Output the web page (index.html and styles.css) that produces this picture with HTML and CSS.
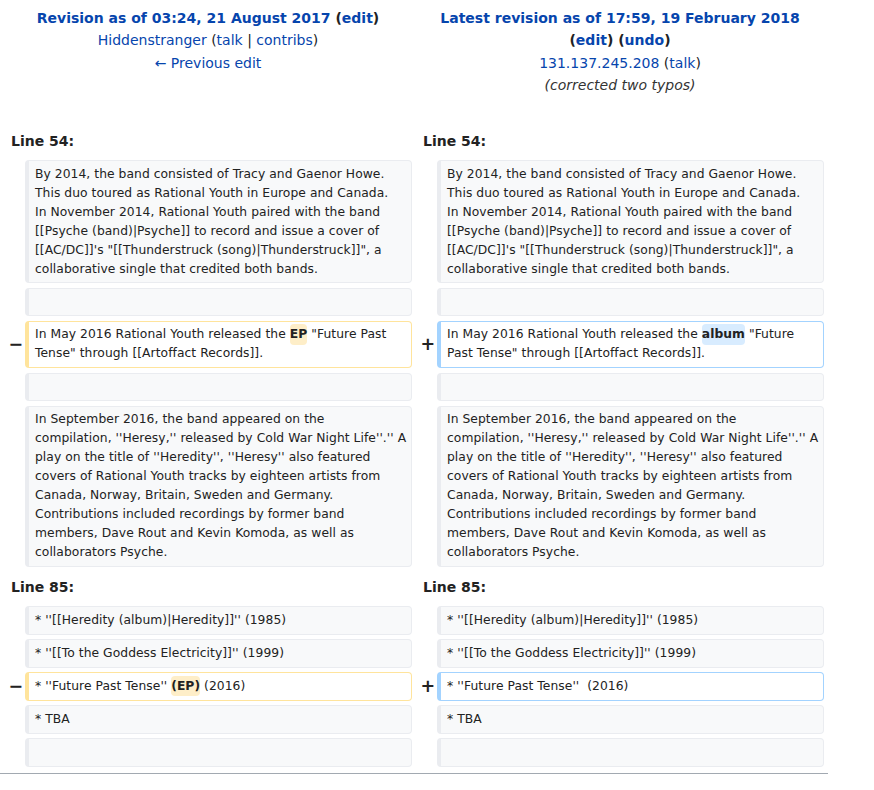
FILE: index.html
```html
<!DOCTYPE html>
<html>
<head>
<meta charset="utf-8">
<link rel="stylesheet" href="styles.css">
</head>
<body>
<div class="diff">
  <div class="title">
    <div class="t-line"><strong><a href="#">Revision as of 03:24, 21 August 2017</a> (<a href="#">edit</a>)</strong></div>
    <div class="t-line"><a href="#">Hiddenstranger</a> (<a href="#">talk</a> | <a href="#">contribs</a>)</div>
    <div class="t-line"><a href="#">← Previous edit</a></div>
  </div>
  <div class="title">
    <div class="t-line"><strong><a href="#">Latest revision as of 17:59, 19 February 2018</a> (<a href="#">edit</a>) (<a href="#">undo</a>)</strong></div>
    <div class="t-line"><a href="#">131.137.245.208</a> (<a href="#">talk</a>)</div>
    <div class="t-line comment">(corrected two typos)</div>
  </div>

  <div class="lineno first">Line 54:</div>
  <div class="lineno first">Line 54:</div>

  <div class="marker"></div>
  <div class="cell ctx pre">By 2014, the band consisted of Tracy and Gaenor Howe.<br>This duo toured as Rational Youth in Europe and Canada.<br>In November 2014, Rational Youth paired with the band<br>[[Psyche (band)|Psyche]] to record and issue a cover of<br>[[AC/DC]]'s "[[Thunderstruck (song)|Thunderstruck]]", a<br>collaborative single that credited both bands.</div>
  <div class="marker"></div>
  <div class="cell ctx pre">By 2014, the band consisted of Tracy and Gaenor Howe.<br>This duo toured as Rational Youth in Europe and Canada.<br>In November 2014, Rational Youth paired with the band<br>[[Psyche (band)|Psyche]] to record and issue a cover of<br>[[AC/DC]]'s "[[Thunderstruck (song)|Thunderstruck]]", a<br>collaborative single that credited both bands.</div>

  <div class="marker"></div>
  <div class="cell ctx"><br></div>
  <div class="marker"></div>
  <div class="cell ctx"><br></div>

  <div class="marker">−</div>
  <div class="cell del pre">In May 2016 Rational Youth released the <del class="chg">EP</del> "Future Past<br>Tense" through [[Artoffact Records]].</div>
  <div class="marker">+</div>
  <div class="cell add pre">In May 2016 Rational Youth released the <ins class="chg">album</ins> "Future<br>Past Tense" through [[Artoffact Records]].</div>

  <div class="marker"></div>
  <div class="cell ctx"><br></div>
  <div class="marker"></div>
  <div class="cell ctx"><br></div>

  <div class="marker"></div>
  <div class="cell ctx pre">In September 2016, the band appeared on the<br>compilation, ''Heresy,'' released by Cold War Night Life''.'' A<br>play on the title of ''Heredity'', ''Heresy'' also featured<br>covers of Rational Youth tracks by eighteen artists from<br>Canada, Norway, Britain, Sweden and Germany.<br>Contributions included recordings by former band<br>members, Dave Rout and Kevin Komoda, as well as<br>collaborators Psyche.</div>
  <div class="marker"></div>
  <div class="cell ctx pre">In September 2016, the band appeared on the<br>compilation, ''Heresy,'' released by Cold War Night Life''.'' A<br>play on the title of ''Heredity'', ''Heresy'' also featured<br>covers of Rational Youth tracks by eighteen artists from<br>Canada, Norway, Britain, Sweden and Germany.<br>Contributions included recordings by former band<br>members, Dave Rout and Kevin Komoda, as well as<br>collaborators Psyche.</div>

  <div class="lineno">Line 85:</div>
  <div class="lineno">Line 85:</div>

  <div class="marker"></div>
  <div class="cell ctx">* ''[[Heredity (album)|Heredity]]'' (1985)</div>
  <div class="marker"></div>
  <div class="cell ctx">* ''[[Heredity (album)|Heredity]]'' (1985)</div>

  <div class="marker"></div>
  <div class="cell ctx">* ''[[To the Goddess Electricity]]'' (1999)</div>
  <div class="marker"></div>
  <div class="cell ctx">* ''[[To the Goddess Electricity]]'' (1999)</div>

  <div class="marker">−</div>
  <div class="cell del">* ''Future Past Tense'' <del class="chg">(EP)</del> (2016)</div>
  <div class="marker">+</div>
  <div class="cell add">* ''Future Past Tense''  (2016)</div>

  <div class="marker"></div>
  <div class="cell ctx">* TBA</div>
  <div class="marker"></div>
  <div class="cell ctx">* TBA</div>

  <div class="marker"></div>
  <div class="cell ctx"><br></div>
  <div class="marker"></div>
  <div class="cell ctx"><br></div>
</div>
<div class="rule"></div>
</body>
</html>
```

FILE: styles.css
```css
html, body {
  margin: 0;
  padding: 0;
  background: #ffffff;
}
body {
  font-family: "DejaVu Sans", sans-serif;
  font-size: 14px;
  color: #222222;
}
a {
  color: #0645ad;
  text-decoration: none;
}
.diff {
  width: 828px;
  box-sizing: border-box;
  padding: 0 4px;
  display: grid;
  grid-template-columns: 17px 387px 17px 387px;
  column-gap: 4px;
  row-gap: 4.6px;
}
.title {
  grid-column: span 2;
  text-align: center;
  line-height: 22.4px;
  padding-top: 7px;
}
.comment {
  font-style: italic;
  color: #333333;
}
.lineno {
  grid-column: span 2;
  font-weight: bold;
  line-height: 22.4px;
  padding: 4.3px 7px 3.3px;
}
.lineno.first {
  margin-top: 24px;
}
.marker {
  align-self: center;
  font-size: 17.5px;
  font-weight: bold;
  line-height: 1.2;
  padding-left: 4.4px;
  white-space: nowrap;
  overflow: visible;
  width: 0;
}
.cell {
  font-size: 12.32px;
  line-height: 19px;
  letter-spacing: 0.05px;
  padding: 3.7px 6px;
  border-style: solid;
  border-width: 1px 1px 1px 4px;
  border-radius: 4px;
  white-space: pre-wrap;
  word-wrap: break-word;
  color: #222222;
}
.cell.pre {
  white-space: pre;
}
.ctx {
  background: #f8f9fa;
  border-color: #eaecf0;
}
.del {
  background: #ffffff;
  border-color: #ffe49c;
}
.add {
  background: #ffffff;
  border-color: #a3d3ff;
}
.chg {
  font-weight: bold;
  text-decoration: none;
  border-radius: 0.33em;
  padding: 0.25em 0;
}
.del .chg {
  background: #feeec8;
}
.add .chg {
  background: #d8ecff;
}
.rule {
  width: 828px;
  height: 1px;
  margin-top: 6.5px;
  background: #a2a9b1;
}
```
